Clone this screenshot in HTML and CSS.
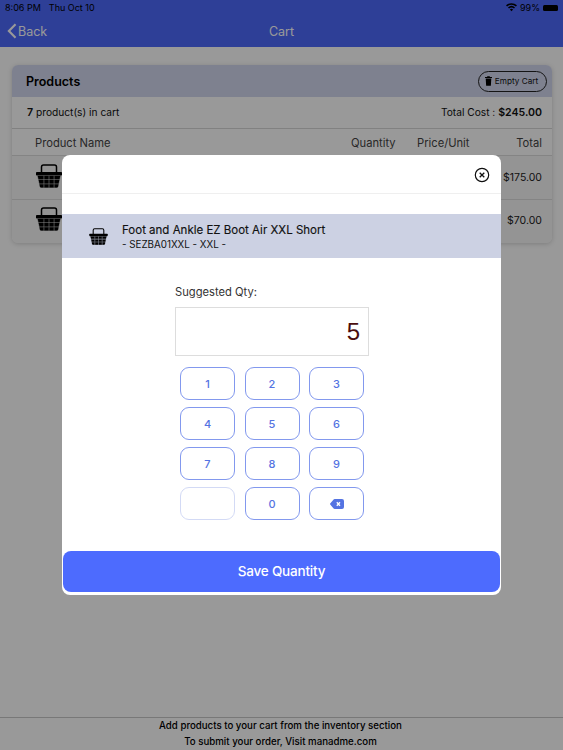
FILE: index.html
```html
<!DOCTYPE html>
<html lang="en">
<head>
<meta charset="utf-8">
<title>Cart</title>
<link rel="stylesheet" href="styles.css">
</head>
<body>
<svg class="defs" width="0" height="0" aria-hidden="true">
  <symbol id="basket" viewBox="0 0 26 24">
    <path d="M5.500 10V3C5.500 1.800 6.300 1 7.500 1h11c1.200 0 2 .8 2 2V10" fill="none" stroke="#000" stroke-width="1.500"/>
    <path d="M0.800 8h24.400q.8 0 .8 .8v1.800q0 .9-.9 .9H.9q-.9 0-.9-.9V8.800q0-.8 .8-.8z"/>
    <path stroke="#000" stroke-width=".35" d="M1.800 12h5.700v3.300H2.500zM8.300 12h4.300v3.300H8.300zM13.400 12h4.300v3.300h-4.300zM18.500 12h5.700l-.7 3.300h-5zM2.700 16.100h4.800v3.300H3.400zM8.300 16.100h4.300v3.300H8.300zM13.400 16.100h4.300v3.300h-4.300zM18.500 16.100h4.800l-.7 3.300h-4.100zM3.600 20.200h3.900v3.300H5.500c-.9 0-1.500-.4-1.600-1.300zM8.300 20.200h4.300v3.300H8.300zM13.400 20.200h4.300v3.300h-4.300zM18.500 20.200h3.900l-.3 2c-.1.900-.7 1.300-1.600 1.300h-2z"/>
  </symbol>
</svg>

<div class="page">
  <header class="appbar">
    <div class="status">
      <span class="status-time">8:06 PM</span>
      <span class="status-date">Thu Oct 10</span>
      <span class="status-right">
        <svg class="wifi" viewBox="0 0 16 12" width="11" height="9"><path d="M8 11.500 5.700 8.900a3.400 3.400 0 0 1 4.600 0zM4.400 7.500 2.900 5.900a7.600 7.600 0 0 1 10.200 0l-1.500 1.600a5.400 5.400 0 0 0-7.200 0zM1.600 4.500 0 2.900a11.800 11.800 0 0 1 16 0l-1.600 1.600a9.600 9.600 0 0 0-12.800 0z"/></svg>
        <span>99%</span>
        <span class="battery"></span>
      </span>
    </div>
    <div class="navbar">
      <span class="back">
        <svg viewBox="0 0 11 18" width="10" height="16"><path d="M9.500 1.500 2 9l7.500 7.500" fill="none" stroke="currentColor" stroke-width="2.400"/></svg>
        <span>Back</span>
      </span>
      <span class="nav-title">Cart</span>
    </div>
  </header>

  <main class="content">
    <section class="card">
      <div class="card-head">
        <h2>Products</h2>
        <button class="empty-btn">
          <svg viewBox="0 0 8 11" width="7" height="10"><path d="M0 1h8v1H0zM2.500 0h3v1h-3zM.8 2.500h6.400L6.700 11H1.300z"/></svg>
          <span>Empty Cart</span>
        </button>
      </div>
      <div class="summary">
        <span><b>7</b> product(s) in cart</span>
        <span>Total Cost : <b>$245.00</b></span>
      </div>
      <div class="cols">
        <span class="col-name">Product Name</span>
        <span class="col-qty">Quantity</span>
        <span class="col-price">Price/Unit</span>
        <span class="col-total">Total</span>
      </div>
      <div class="row">
        <svg class="row-icon" width="26" height="24"><use href="#basket"/></svg>
        <span class="row-total">$175.00</span>
      </div>
      <div class="row">
        <svg class="row-icon" width="26" height="24"><use href="#basket"/></svg>
        <span class="row-total">$70.00</span>
      </div>
    </section>
  </main>

  <footer class="foot">
    <div>Add products to your cart from the inventory section</div>
    <div>To submit your order, Visit manadme.com</div>
  </footer>
</div>

<div class="scrim"></div>

<div class="modal">
  <div class="modal-head">
    <svg class="close" viewBox="0 0 16 16" width="16" height="16"><circle cx="8" cy="8" r="6.700" fill="none" stroke="#111" stroke-width="1.200"/><path d="M5.700 5.700l4.600 4.600M10.300 5.700l-4.600 4.600" stroke="#111" stroke-width="1.300"/></svg>
  </div>
  <div class="item">
    <svg class="item-icon" width="19" height="17"><use href="#basket"/></svg>
    <div class="item-text">
      <div class="item-name">Foot and Ankle EZ Boot Air XXL Short</div>
      <div class="item-sub">- SEZBA01XXL - XXL -</div>
    </div>
  </div>
  <div class="qty">
    <div class="qty-label">Suggested Qty:</div>
    <div class="qty-box">5</div>
    <div class="keys">
      <button class="key">1</button>
      <button class="key">2</button>
      <button class="key">3</button>
      <button class="key">4</button>
      <button class="key">5</button>
      <button class="key">6</button>
      <button class="key">7</button>
      <button class="key">8</button>
      <button class="key">9</button>
      <button class="key key-blank"></button>
      <button class="key">0</button>
      <button class="key">
        <svg viewBox="0 0 14 10" width="14" height="10"><path d="M4.600 0H12A2 2 0 0 1 14 2v6a2 2 0 0 1-2 2H4.600a1.500 1.500 0 0 1-1-.5L.4 5.700a1 1 0 0 1 0-1.400L3.600.5a1.500 1.500 0 0 1 1-.5z" fill="#5473e2"/><path d="M6.800 3.200l3.200 3.600M10 3.200 6.800 6.800" stroke="#fff" stroke-width="1.300"/></svg>
      </button>
    </div>
  </div>
  <button class="save">Save Quantity</button>
</div>
</body>
</html>
```
FILE: styles.css
```css
* { box-sizing: border-box; }
html, body { margin: 0; padding: 0; }
body {
  width: 563px;
  height: 750px;
  overflow: hidden;
  position: relative;
  background: #fff;
  font-family: Inter, "Liberation Sans", sans-serif;
  color: #000;
}
.defs { position: absolute; }
.page { height: 750px; display: flex; flex-direction: column; }

.appbar { height: 47px; background: #4d69fc; color: #fff; flex: none; }
.status {
  height: 15px;
  display: flex;
  align-items: center;
  padding: 0 5px 0;
  font-size: 9px;
  color: #000;
  gap: 8px;
}
.status-right { margin-left: auto; display: flex; align-items: center; gap: 3px; }
.battery { width: 15px; height: 6px; background: #000; border-radius: 1.500px; display: block; }
.navbar {
  height: 32px;
  display: flex;
  align-items: center;
  justify-content: center;
  position: relative;
  font-size: 12.500px;
}
.back { position: absolute; left: 7px; top: 8px; display: flex; align-items: center; gap: 1px; color: #fff; }

.content { flex: 1; padding: 18px 11px 0 12px; }
.card {
  background: #fff;
  border-radius: 6px;
  overflow: hidden;
  box-shadow: 0 1px 5px rgba(0,0,0,.18);
}
.card-head {
  height: 32px;
  background: #d3d8ef;
  display: flex;
  align-items: center;
  justify-content: space-between;
  padding: 0 5px 0 14px;
}
.card-head h2 { margin: 0; font-size: 12.500px; font-weight: 600; }
.empty-btn {
  height: 21px;
  width: 69px;
  border: 1px solid #222;
  border-radius: 11px;
  background: transparent;
  display: flex;
  align-items: center;
  justify-content: center;
  gap: 3px;
  padding: 0 2px 0 0;
  font: 400 8.200px Inter, sans-serif;
  color: #111;
}
.summary {
  height: 32px;
  display: flex;
  align-items: center;
  justify-content: space-between;
  padding: 0 10px 0 15px;
  font-size: 10.200px;
  border-bottom: 1px solid #d8d8d8;
  color: #111;
}
.summary b { font-weight: 600; font-size: 10.600px; }
.cols {
  height: 26px;
  display: flex;
  align-items: center;
  font-size: 11.200px;
  color: #444;
  padding: 2px 10px 0 0;
}
.col-name { margin-left: 23px; flex: 1; }
.col-qty { width: 66px; }
.col-price { width: 71px; }
.col-total { width: 54px; text-align: right; }
.row {
  height: 44px;
  display: flex;
  align-items: center;
  justify-content: space-between;
  padding: 0 10px 0 24px;
  font-size: 10.500px;
  color: #222;
  border-top: 1px solid #ddd;
}
.row + .row { height: 43.500px; }
.row-total { margin-top: -1px; }
.row-icon { display: block; margin-top: -4px; }
.content .row { background: #f7f7f7; }

.foot {
  height: 33px;
  flex: none;
  border-top: 1px solid #c9c9c9;
  text-align: center;
  font-size: 9.700px;
  font-weight: 500;
  line-height: 15.500px;
  padding-right: 2px;
  color: #000;
}

.scrim { position: absolute; inset: 0; background: rgba(0,0,0,.4); }

.modal {
  position: absolute;
  left: 62px;
  top: 155px;
  width: 439px;
  height: 440px;
  background: #fff;
  border-radius: 8px;
  overflow: hidden;
  display: flex;
  flex-direction: column;
}
.modal-head {
  height: 39px;
  border-bottom: 1px solid #efefef;
  display: flex;
  justify-content: flex-end;
  padding: 12px 11px 0 0;
  flex: none;
}
.item {
  margin-top: 20px;
  height: 44px;
  background: #ccd1e3;
  display: flex;
  align-items: center;
  padding-left: 27px;
  flex: none;
}
.item-text { margin-left: 14px; color: #111; padding-top: 2px; }
.item-name { font-size: 11.500px; font-weight: 400; line-height: 15px; -webkit-text-stroke: .15px #111; }
.item-sub { font-size: 9.800px; line-height: 13px; margin-top: 0; }
.qty { margin-left: 113px; width: 194px; flex: none; }
.qty-label { margin-top: 27px; font-size: 11.200px; line-height: 14px; color: #333; }
.qty-box {
  margin-top: 8px;
  height: 49px;
  border: 1px solid #ddd;
  text-align: right;
  padding-right: 8px;
  font: 400 24px/48px "Liberation Sans", sans-serif;
  color: #4a0e0e;
}
.keys {
  margin: 11px 5px 0;
  display: grid;
  grid-template-columns: repeat(3, 55px);
  grid-auto-rows: 33px;
  column-gap: 9.500px;
  row-gap: 7px;
}
.key {
  border: 1.300px solid #8298ee;
  border-radius: 9px;
  background: #fff;
  padding: 0;
  font: 500 11px Inter, sans-serif;
  color: #5473e2;
  display: flex;
  align-items: center;
  justify-content: center;
}
.key-blank { border-color: #d3daf5; }
.save {
  margin: auto 1px 3px;
  height: 41px;
  background: #4d6bfe;
  border: 0;
  border-radius: 8px;
  color: #fff;
  font: 500 13.500px Inter, sans-serif;
  letter-spacing: -.2px;
  padding: 0 0 2px;
  flex: none;
}
```
